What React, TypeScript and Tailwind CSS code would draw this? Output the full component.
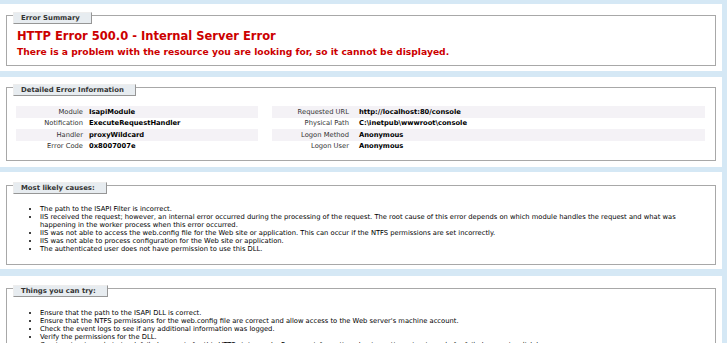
import type { ReactNode } from "react";

const FONT = "font-['Verdana','DejaVu_Sans',sans-serif]";

const leftRows = [
  ["Module", "IsapiModule"],
  ["Notification", "ExecuteRequestHandler"],
  ["Handler", "proxyWildcard"],
  ["Error Code", "0x8007007e"],
];

const rightRows = [
  ["Requested URL", "http://localhost:80/console"],
  ["Physical Path", "C:\\inetpub\\wwwroot\\console"],
  ["Logon Method", "Anonymous"],
  ["Logon User", "Anonymous"],
];

const causes = [
  "The path to the ISAPI Filter is incorrect.",
  "IIS received the request; however, an internal error occurred during the processing of the request. The root cause of this error depends on which module handles the request and what was happening in the worker process when this error occurred.",
  "IIS was not able to access the web.config file for the Web site or application. This can occur if the NTFS permissions are set incorrectly.",
  "IIS was not able to process configuration for the Web site or application.",
  "The authenticated user does not have permission to use this DLL.",
];

const tries = [
  "Ensure that the path to the ISAPI DLL is correct.",
  "Ensure that the NTFS permissions for the web.config file are correct and allow access to the Web server's machine account.",
  "Check the event logs to see if any additional information was logged.",
  "Verify the permissions for the DLL.",
  "Create a tracing rule to track failed requests for this HTTP status code. For more information about creating a tracing rule for failed requests, click here.",
];

function Panel({ title, outer, inner, children }: { title: string; outer: string; inner: string; children: ReactNode }) {
  return (
    <div className={`bg-white mr-[5px] px-[6px] ${outer}`}>
      <div className={`border border-[#a8a8a8] pl-[10px] pr-[10px] ${inner}`}>
        <div className="-mt-[4px] -ml-[4px] w-fit h-[12px] flex items-center pl-[7px] pr-[11px] bg-[#e7ecf0] border border-t-[#ededed] border-l-[#ededed] border-r-[#969696] border-b-[#969696] text-[6.9px] font-bold text-[#333]">
          {title}
        </div>
        {children}
      </div>
    </div>
  );
}

function DetailTable({ rows, labelW, gap }: { rows: string[][]; labelW: string; gap: string }) {
  return (
    <div className="flex flex-col">
      {rows.map(([k, v], i) => (
        <div key={k} className={`flex h-[11.5px] items-center ${i % 2 === 0 ? "bg-[#f4f2f6]" : ""}`}>
          <span className={`${labelW} shrink-0 text-right text-[#333]`}>{k}</span>
          <span className={`${gap} font-bold text-black`}>{v}</span>
        </div>
      ))}
    </div>
  );
}

export default function App() {
  return (
    <div className={`${FONT} bg-[#d5e8f5] h-[343px] overflow-hidden pt-[4px] text-[6.75px] leading-[8px] text-black`}>
      <Panel title="Error Summary" outer="pt-[11px] pb-[5px]" inner="pb-[8px]">
        <h2 className="mt-[5px] text-[11.5px] leading-[14px] font-bold text-[#cc0000]">HTTP Error 500.0 - Internal Server Error</h2>
        <h3 className="mt-[3px] text-[9.2px] leading-[11px] font-bold text-[#cc0000]">
          There is a problem with the resource you are looking for, so it cannot be displayed.
        </h3>
      </Panel>

      <Panel title="Detailed Error Information" outer="mt-[6px] pt-[10px] pb-[6px]" inner="pb-[8px]">
        <div className="mt-[10px] -ml-[1px] flex gap-[14px]">
          <div className="w-[242px] shrink-0">
            <DetailTable rows={leftRows} labelW="w-[67px]" gap="pl-[6px]" />
          </div>
          <div className="flex-1">
            <DetailTable rows={rightRows} labelW="w-[77px]" gap="pl-[10px]" />
          </div>
        </div>
      </Panel>

      <Panel title="Most likely causes:" outer="mt-[5px] pt-[13px] pb-[4px]" inner="pb-[11px]">
        <ul className="mt-[11px] pl-[23px] list-disc">
          {causes.map((c) => (
            <li key={c}>{c}</li>
          ))}
        </ul>
      </Panel>

      <Panel title="Things you can try:" outer="mt-[7px] pt-[12px] pb-[4px]" inner="pb-[12px]">
        <ul className="mt-[12px] pl-[23px] list-disc">
          {tries.map((c) => (
            <li key={c}>{c}</li>
          ))}
        </ul>
      </Panel>
    </div>
  );
}
